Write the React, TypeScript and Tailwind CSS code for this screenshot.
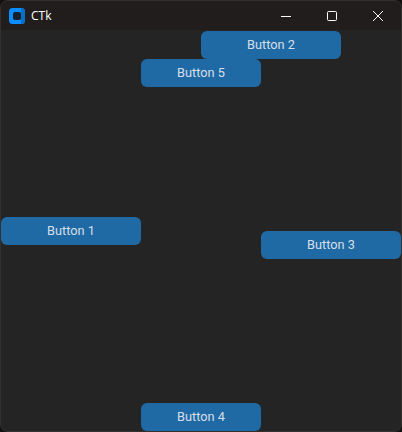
const BUTTON = "flex items-center justify-center rounded-[6px] bg-[#1f6aa5] text-[12.75px] font-normal text-[#d6dfe9] [font-family:Roboto,sans-serif]";

export default function App() {
  return (
    <div className="w-[402px] h-[432px] bg-[#141211] overflow-hidden">
      <div className="w-full h-full flex flex-col rounded-[8px] border border-[#333130] bg-[#242424]">
        {/* title bar */}
        <div className="h-[29px] shrink-0 flex items-center bg-[#201d1c] rounded-t-[8px]">
          <svg className="ml-[8px]" width="16" height="16" viewBox="0 0 16 16">
            <rect x="0" y="0" width="16" height="16" rx="3.5" fill="#0a8dff" />
            <path d="M12 0h0.5a3.5 3.5 0 0 1 3.5 3.5v9a3.5 3.5 0 0 1 -3.5 3.5h-0.5z" fill="#0a6fc4" />
            <rect x="4" y="4" width="8" height="8" rx="2" fill="#14202c" />
          </svg>
          <span className="ml-[6px] text-[12px] text-white [font-family:'Open_Sans',sans-serif]">CTk</span>
          <div className="ml-auto flex items-center text-white">
            <div className="w-[46px] h-[29px] flex items-center justify-center">
              <svg width="10" height="10" viewBox="0 0 10 10"><path d="M0 5.5H10" stroke="currentColor" strokeWidth="1" /></svg>
            </div>
            <div className="w-[46px] h-[29px] flex items-center justify-center">
              <svg width="10" height="10" viewBox="0 0 10 10"><rect x="0.5" y="0.5" width="9" height="9" rx="1" fill="none" stroke="currentColor" strokeWidth="1" /></svg>
            </div>
            <div className="w-[46px] h-[29px] flex items-center justify-center">
              <svg width="10" height="10" viewBox="0 0 10 10"><path d="M0 0L10 10M10 0L0 10" stroke="currentColor" strokeWidth="1" /></svg>
            </div>
          </div>
        </div>

        {/* CTk place() demo: column lines at 140/200/260/340 */}
        <div className="mt-[1px] grid grid-cols-[140px_60px_60px_80px_60px] grid-rows-[28px_28px_130px_14px_14px_14px_144px_28px]">
          <button className={`${BUTTON} col-start-3 col-span-2 row-start-1`}>Button 2</button>
          <button className={`${BUTTON} col-start-2 col-span-2 row-start-2`}>Button 5</button>
          <button className={`${BUTTON} col-start-1 row-start-4 row-span-2`}>Button 1</button>
          <button className={`${BUTTON} col-start-4 col-span-2 row-start-5 row-span-2`}>Button 3</button>
          <button className={`${BUTTON} col-start-2 col-span-2 row-start-8`}>Button 4</button>
        </div>
      </div>
    </div>
  );
}
